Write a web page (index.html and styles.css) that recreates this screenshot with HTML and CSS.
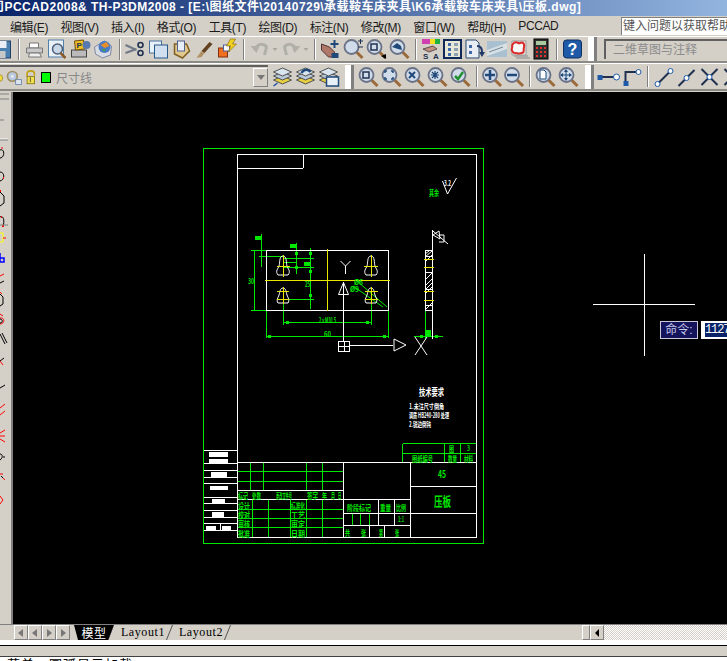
FILE: index.html
```html
<!DOCTYPE html>
<html lang="zh">
<head>
<meta charset="utf-8">
<title>PCCAD2008</title>
<link rel="stylesheet" href="styles.css">
</head>
<body>
<svg class="defs" width="0" height="0">
  <symbol id="mag" viewBox="0 0 22 22">
    <line x1="14" y1="14" x2="20" y2="20" stroke="#9a6a3a" stroke-width="3"/>
    <circle cx="9" cy="9" r="7" fill="#d0dcea" stroke="#6a7288" stroke-width="1.800"/>
  </symbol>
  <symbol id="layers" viewBox="0 0 22 22">
    <path d="M2 14l9-4 9 4-9 4z" fill="#e8d040" stroke="#505050"/>
    <path d="M2 10l9-4 9 4-9 4z" fill="#b8c8d8" stroke="#505050"/>
    <path d="M2 6l9-4 9 4-9 4z" fill="#d8e4ee" stroke="#505050"/>
  </symbol>
</svg>

<header class="titlebar"><span class="title-text">司PCCAD2008&amp; TH-P3DM2008 - [E:\图纸文件\20140729\承载鞍车床夹具\K6承载鞍车床夹具\压板.dwg]</span></header>

<nav class="menubar">
  <span class="menu">编辑(E)</span><span class="menu">视图(V)</span><span class="menu">插入(I)</span><span class="menu">格式(O)</span><span class="menu">工具(T)</span><span class="menu">绘图(D)</span><span class="menu">标注(N)</span><span class="menu">修改(M)</span><span class="menu">窗口(W)</span><span class="menu">帮助(H)</span><span class="menu">PCCAD</span>
  <span class="askbox">键入问题以获取帮助</span>
</nav>

<div class="toolrow toolrow-first">
  <svg class="ico" viewBox="0 0 22 22"><rect x="1" y="3" width="18" height="17" fill="#4a80b0" stroke="#20406a"/><rect x="5" y="3" width="10" height="7" fill="#e8eef4"/><rect x="6" y="13" width="8" height="7" fill="#c8c8c8"/></svg>
  <i class="sep"></i>
  <svg class="ico" viewBox="0 0 22 22"><path d="M6 5h9v5H6z" fill="#fff" stroke="#777"/><path d="M3 10h16v5H3z" fill="#c8c8c8" stroke="#777"/><path d="M6 15h10l2 4H5z" fill="#eee" stroke="#777"/></svg>
  <svg class="ico" viewBox="0 0 22 22"><rect x="2" y="2" width="15" height="17" fill="#e8f0f8" stroke="#5080a8"/><circle cx="11" cy="11" r="5" fill="#c8d8e8" stroke="#506078" stroke-width="1.5"/><line x1="14" y1="15" x2="19" y2="20" stroke="#8a5a2a" stroke-width="2.5"/></svg>
  <svg class="ico" viewBox="0 0 22 22"><rect x="2" y="12" width="15" height="7" fill="#bbb" stroke="#444"/><path d="M5 3l9-1 1 9-9 1z" fill="#f0c020" stroke="#705010"/><circle cx="17" cy="7" r="4" fill="#5878b0"/><text class="tiny-ico" x="7" y="10">P</text></svg>
  <svg class="ico" viewBox="0 0 22 22"><path d="M2 9l10-6 7 5-1 9-8 3-7-4z" fill="#d8dce4" stroke="#8088a0"/><circle cx="12" cy="9" r="6" fill="#4878c8"/><path d="M8 7l6-3 3 4-5 2z" fill="#e89028"/><path d="M9 11l4 0-1 3z" fill="#48a048"/></svg>
  <i class="sep"></i>
  <svg class="ico" viewBox="0 0 22 22"><path d="M1 7l11 5M1 15l11-4" stroke="#707888" stroke-width="2"/><circle cx="16" cy="7" r="2.5" fill="none" stroke="#203050" stroke-width="1.6"/><circle cx="16" cy="15" r="2.5" fill="none" stroke="#203050" stroke-width="1.6"/></svg>
  <svg class="ico" viewBox="0 0 22 22"><rect x="2" y="3" width="12" height="12" fill="#e8f0f8" stroke="#4870a0"/><rect x="7" y="7" width="13" height="13" fill="#d0e0f0" stroke="#285888"/></svg>
  <svg class="ico" viewBox="0 0 22 22"><path d="M4 6h12l3 7-7 7-8-4z" fill="#e0c890" stroke="#806020" stroke-width="1.5"/><rect x="7" y="3" width="7" height="10" fill="#e8eef8" stroke="#506090"/></svg>
  <svg class="ico" viewBox="0 0 22 22"><path d="M16 4l3 2-8 9-3-2z" fill="#604020"/><path d="M8 13l3 2-3 4-5 1z" fill="#b09060"/></svg>
  <svg class="ico" viewBox="0 0 22 22"><rect x="2" y="10" width="9" height="9" fill="#f07020" stroke="#803010"/><rect x="7" y="7" width="6" height="6" fill="#f8f8f8" stroke="#5060a0"/><path d="M14 1l5 0-3 5 4 0-8 8 2-6-4 0z" fill="#f0d020" stroke="#806000" stroke-width=".6"/></svg>
  <i class="sep"></i>
  <svg class="ico ico-wide" viewBox="0 0 30 22"><path d="M6 12c3-7 9-7 12-3l-2 8" fill="none" stroke="#b0b0a8" stroke-width="3"/><path d="M2 8l6 7 3-7z" fill="#b0b0a8"/><path d="M24 10h5l-2.500 3z" fill="#a8a8a0"/></svg>
  <svg class="ico ico-wide" viewBox="0 0 30 22"><path d="M17 12c-3-7-9-7-12-3l2 8" fill="none" stroke="#b0b0a8" stroke-width="3"/><path d="M21 8l-6 7-3-7z" fill="#b0b0a8"/><path d="M24 10h5l-2.500 3z" fill="#a8a8a0"/></svg>
  <i class="sep"></i>
  <svg class="ico" viewBox="0 0 22 22"><path d="M2 6l8 3 5 5v5H9L2 12z" fill="#b07868" stroke="#503030"/><path d="M15 2v8M11 6h8" stroke="#204878" stroke-width="2"/><rect x="12" y="15" width="7" height="5" fill="#204878"/></svg>
  <svg class="ico"><use href="#mag"/><path d="M16 3h5M18.500 1v5" stroke="#203050"/><path d="M16 9h5" stroke="#203050"/></svg>
  <svg class="ico"><use href="#mag"/><rect x="6" y="6" width="6" height="6" fill="none" stroke="#203050" stroke-width="1.500"/><path d="M16 18l5 3v-5z" fill="#000"/></svg>
  <svg class="ico"><use href="#mag"/><path d="M4 9l5-4 4 3 1 4-4-1z" fill="#204878"/></svg>
  <i class="sep"></i>
  <svg class="ico ico-22" viewBox="0 0 22 22"><rect x="2" y="1" width="18" height="5" fill="#d040b0"/><rect x="10" y="1" width="5" height="5" fill="#f0e020"/><rect x="15" y="1" width="5" height="5" fill="#20b040"/><path d="M3 11l10-3 4 3-8 3z" fill="#c09080" stroke="#605050"/><text class="tiny-ico" x="3" y="21">S</text><text class="tiny-ico" x="13" y="21">A</text></svg>
  <svg class="ico ico-22" viewBox="0 0 22 22"><rect x="2" y="2" width="17" height="18" fill="#e8e8d8" stroke="#102858" stroke-width="2"/><path d="M6 5h3v3H6zM6 10h3v3H6zM6 15h3v3H6z" fill="#4068a8"/><path d="M12 5h4v3h-4zM12 10h4v3h-4zM12 15h4v3h-4z" fill="#90a0b0"/></svg>
  <svg class="ico ico-22" viewBox="0 0 22 22"><path d="M2 2h10l3 3v15H2z" fill="#e8eef4" stroke="#284870"/><path d="M5 7h3v3H5zM5 13h3v3H5z" fill="#4068a8"/><path d="M13 8c4 0 5 3 5 6" fill="none" stroke="#203868" stroke-width="2"/><path d="M15 14h6l-3 5z" fill="#203868"/></svg>
  <svg class="ico ico-22" viewBox="0 0 22 22"><rect x="1" y="3" width="20" height="16" fill="#a8c0d0"/><path d="M1 12l20-7v6L1 18z" fill="#d8e0e4"/><path d="M3 14l14-5" stroke="#708898"/></svg>
  <svg class="ico ico-22" viewBox="0 0 22 22"><path d="M6 18h14M8 20h14" stroke="#888"/><path d="M4 3h14v14H4z" fill="#f0e4e0" stroke="#999"/><path d="M5 6c3-4 5 0 7-1s5 0 4 4 1 5-2 6-5 0-7 0-4-3-3-5-1-2 1-4z" fill="#f8f8f8" stroke="#d82828" stroke-width="2"/></svg>
  <svg class="ico ico-22" viewBox="0 0 22 22"><rect x="4" y="1" width="14" height="20" fill="#303030" stroke="#000"/><rect x="6" y="3" width="10" height="4" fill="#a8c8a0"/><path d="M6 9h2v2H6zM10 9h2v2h-2zM14 9h2v2h-2zM6 13h2v2H6zM10 13h2v2h-2zM14 13h2v2h-2zM6 17h2v2H6zM10 17h2v2h-2zM14 17h2v2h-2z" fill="#e03030"/></svg>
  <i class="sep"></i>
  <svg class="ico" viewBox="0 0 22 22"><rect x="2" y="2" width="18" height="18" rx="3" fill="#1e5aa8" stroke="#103060"/><text class="help-q" x="11" y="17">?</text></svg>
  <i class="grip grip-first"></i>
  <span class="workspace-combo">二维草图与注释</span>
</div>

<div class="toolrow toolrow-second">
  <div class="layer-combo">
    <svg class="ico ico-bulb" viewBox="0 0 9 22"><circle cx="-1" cy="11" r="6" fill="#f0d840" stroke="#807010"/></svg>
    <svg class="ico ico-lay" viewBox="0 0 22 22"><circle cx="9" cy="9" r="6" fill="#b8c8e0" stroke="#a09060" stroke-width="2"/><circle cx="9" cy="9" r="2" fill="#e0e8f0"/><rect x="13" y="13" width="7" height="6" fill="#dce4ee" stroke="#6080a8"/></svg>
    <svg class="ico ico-lay" viewBox="0 0 22 22"><path d="M5 9V6c0-5 9-5 9 0v2" fill="none" stroke="#c0a010" stroke-width="2"/><rect x="5" y="9" width="9" height="9" fill="#f0e050" stroke="#807010"/><path d="M9 10v6" stroke="#404040"/></svg>
    <span class="swatch"></span>
    <span class="layer-name">尺寸线</span>
    <span class="combo-btn"></span>
  </div>
  <svg class="ico ico-first" viewBox="0 0 22 22"><use href="#layers"/><path d="M2 20l4-3" stroke="#2050a0" stroke-width="1.500"/></svg>
  <svg class="ico" viewBox="0 0 22 22"><use href="#layers"/><path d="M7 7c2-4 7-4 9-1" fill="none" stroke="#204878" stroke-width="2.500"/></svg>
  <svg class="ico" viewBox="0 0 22 22"><use href="#layers"/><rect x="9" y="11" width="12" height="9" fill="#e8f0f8" stroke="#204878" stroke-width="1.500"/></svg>
  <i class="grip grip-mid"></i>
  <svg class="ico"><use href="#mag"/><rect x="6" y="6" width="6" height="6" fill="none" stroke="#203050" stroke-width="1.500"/></svg>
  <svg class="ico"><use href="#mag"/><path d="M5 7V5h2M11 5h2v2M13 11v2h-2M7 13H5v-2" fill="none" stroke="#204878" stroke-width="1.500"/></svg>
  <svg class="ico"><use href="#mag"/><path d="M6 6l6 6M12 6l-6 6" stroke="#204878" stroke-width="2"/></svg>
  <svg class="ico"><use href="#mag"/><path d="M9 5v8M5 9h8M6 6l6 6M12 6l-6 6" stroke="#204878" stroke-width="1.200"/></svg>
  <svg class="ico"><use href="#mag"/><path d="M6 10l3 3 5-7" fill="none" stroke="#209030" stroke-width="2.500"/></svg>
  <i class="sep"></i>
  <svg class="ico ico-22"><use href="#mag"/><path d="M9 4v10M4 9h10" stroke="#204878" stroke-width="2.500"/></svg>
  <svg class="ico ico-22"><use href="#mag"/><path d="M4 9h10" stroke="#204878" stroke-width="2.500"/></svg>
  <i class="sep"></i>
  <svg class="ico"><use href="#mag"/><path d="M6 4h4l2 2v7H6z" fill="#fff" stroke="#204878"/></svg>
  <svg class="ico"><use href="#mag"/><path d="M9 4v10M4 9h10" stroke="#204878"/><path d="M9 3l-2 3h4zM9 15l-2-3h4zM3 9l3-2v4zM15 9l-3-2v4z" fill="#204878"/></svg>
  <i class="grip grip-last"></i>
  <svg class="ico" viewBox="0 0 22 22"><line x1="2" y1="11" x2="18" y2="11" stroke="#203050" stroke-width="2"/><rect x="0" y="9" width="5" height="5" fill="#1e5aa8"/><circle cx="19" cy="11" r="3" fill="#fff" stroke="#1e5aa8"/></svg>
  <svg class="ico" viewBox="0 0 22 22"><path d="M5 18V6h11" fill="none" stroke="#203050" stroke-width="2"/><rect x="3" y="15" width="5" height="5" fill="#1e5aa8"/><circle cx="18" cy="6" r="2.500" fill="#fff" stroke="#1e5aa8"/></svg>
  <i class="sep"></i>
  <svg class="ico" viewBox="0 0 22 22"><line x1="5" y1="18" x2="18" y2="5" stroke="#203050" stroke-width="2"/><circle cx="5" cy="18" r="2.500" fill="#fff" stroke="#1e5aa8"/><circle cx="18" cy="5" r="2.500" fill="#fff" stroke="#1e5aa8"/></svg>
  <svg class="ico" viewBox="0 0 22 22"><line x1="3" y1="20" x2="19" y2="4" stroke="#203050" stroke-width="2"/><circle cx="11" cy="12" r="2.500" fill="#fff" stroke="#1e5aa8"/></svg>
  <svg class="ico" viewBox="0 0 22 22"><path d="M3 3l16 16M19 3L3 19" stroke="#203050" stroke-width="2"/><circle cx="11" cy="11" r="2.500" fill="#fff" stroke="#1e5aa8"/></svg>
  <svg class="ico" viewBox="0 0 22 22"><path d="M3 3l16 16M19 3L3 19" stroke="#203050" stroke-width="2"/><circle cx="11" cy="11" r="2.500" fill="#fff" stroke="#1e5aa8"/></svg>
</div>

<main class="workspace">
  <aside class="sidestrip">
    <svg class="sidestrip-art" viewBox="0 0 11 534" width="11" height="534" fill="none" stroke="#000" stroke-width="1">
      <path d="M0 2h9M0 7h9" stroke="#808080"/>
      <path d="M0 28h4" stroke="#808080"/>
      <path d="M0 47h8" stroke="#fff"/><path d="M0 48h8" stroke="#808080"/>
      <path d="M0 58c5-2 5 8 0 8"/><path d="M1 56l2 0" stroke="#f00"/>
      <path d="M0 80c5 0 5 8 0 9"/><path d="M3 86h1" stroke="#f00" stroke-width="2"/>
      <path d="M0 100l4 4v7l-4 3"/><path d="M0 99h1" stroke="#f00" stroke-width="2"/>
      <path d="M0 125c3-2 5 3 3 9"/><path d="M2 134h2M1 125h1" stroke="#f00" stroke-width="2"/>
      <path d="M0 133h8" stroke="#808080"/>
      <path d="M0 141h3v9H0" stroke="#ff0"/><path d="M3 146h3" stroke="#f00"/>
      <path d="M0 161v9h4v-4H0" stroke="#00f" stroke-width="1.500"/>
      <path d="M0 184l4-2" stroke="#f00"/><path d="M0 191l4-2"/>
      <path d="M0 202l3 3v7l-3 2"/><path d="M0 200l2 2" stroke="#f00"/>
      <path d="M0 222l3 2M0 226c5-1 5 6 0 6" stroke="#f00"/><path d="M0 227c3 0 3 4 0 4"/>
      <path d="M0 242l5 10M2 241l5 10"/>
      <path d="M4 266l-4 3"/><path d="M0 269l3 4" stroke="#f00"/>
      <path d="M0 296l5-3"/>
      <path d="M0 316l5-4M0 323l5-4" stroke="#f00"/>
      <path d="M0 341l5-3M0 344h5M0 347l5 3" stroke="#f00"/>
      <path d="M0 362c3 0 3 4 0 6M3 365h2"/>
      <path d="M0 382l3 0M3 386l2 2" stroke="#f00"/><path d="M1 384l2 2"/>
      <path d="M0 404l3 4-3 4" stroke="#f00"/>
    </svg>
  </aside>
  <div class="canvas">
    <svg class="drawing" viewBox="13 93 714 532" xmlns="http://www.w3.org/2000/svg">
      <g class="g-line">
        <rect x="203.500" y="149.500" width="280" height="395"/>
        <path d="M402.500 444.500h74M402.500 454.500h74M402.500 444.500v19M444.500 444.500v19M460.500 444.500v19"/>
        <path d="M250.500 463v28M263.500 463v28M306.500 463v28M322.500 463v28M237 472.500h106M237 482.500h106"/>
        <path d="M252.500 500v38M268.500 500v38M290.500 500v38M306.500 500v38M322.500 500v38M237 510.500h106M237 519.500h106M237 528.500h106"/>
        <path d="M352.500 514v12M360.500 514v12M369.500 514v12"/>
        <path d="M251 251.500h15M251 311.500h15M254.500 251v60"/>
        <path d="M266.500 311v28M388.500 311v28M266 337.500h122M283.500 303v23M371.500 303v23M283 323.500h88"/>
        <path d="M261.500 235v33M296.500 244v31M310.500 249v61M259 257.500h24M283 259.500h31M283 263.500h13M283 268.500h31M283 300.500h31"/>
        <path d="M425.500 312v28M432.500 312v28M414 337.500h29"/>
      </g>
      <g class="g-line g-smooth"><path d="M357 282l30 26M353 287l30 21"/></g>
      <g class="g-fill">
        <rect x="255" y="237" width="6" height="4"/><rect x="290" y="245" width="6" height="4"/><rect x="304" y="263" width="6" height="4"/>
        <rect x="425" y="331" width="6" height="6"/>
        <rect x="268" y="336" width="3" height="3"/><rect x="383" y="336" width="3" height="3"/><rect x="286" y="322" width="3" height="3"/><rect x="366" y="322" width="3" height="3"/>
        <rect x="295" y="253" width="3" height="3"/><rect x="295" y="267" width="3" height="3"/><rect x="309" y="253" width="3" height="3"/><rect x="309" y="271" width="3" height="3"/><rect x="309" y="295" width="3" height="3"/>
        <rect x="420" y="336" width="3" height="3"/><rect x="435" y="336" width="3" height="3"/>
      </g>
      <g class="g-white">
        <path d="M237.500 155v383.500H476.500V155.500H237M303.500 155v14M237 169.500h66"/>
        <path d="M204 451.500h33M204 464.500h33M204 471.500h33M204 478.500h33M204 484.500h33M204 498.500h33M204 504.500h33M204 511.500h33M204 518.500h33M204 524.500h33M204 531.500h33M220.500 524v7"/>
        <path d="M237 463.500h239M343.500 463v75M410.500 463v75M410 487.500h66M410 514.500h66M237 491.500h106M237 500.500h173M343 514.500h67M343 526.500h67M378.500 500v26M394.500 500v26M369.500 526v12M384.500 526v12"/>
        <rect x="266.500" y="251.500" width="122" height="60"/>
        <path d="M343.500 283v59M349 346.500h44"/>
        <rect x="338.500" y="342.500" width="11" height="10"/><path d="M344 342v10M338 347.500h11"/>
        <path d="M432.500 231v109M425.500 251.500h7v60h-7zM425 257h7M425 273.500h7M425 290h7M425 306h7"/>
      </g>
      <g class="g-white g-smooth">
        <path d="M340.500 262l5 5 5-5M345.500 267v8"/>
        <path d="M338.500 295.500l5-12 5 12z"/>
        <path d="M394 340l12 6-12 6z"/>
        <path d="M415 338l12 18M427 338l-12 18"/>
        <path d="M283 257c4 0 3 7 4 10s4 5 1 9h-10c-3-4 0-6 1-9s0-10 4-10z"/>
        <path d="M371 257c4 0 3 7 4 10s4 5 1 9h-10c-3-4 0-6 1-9s0-10 4-10z"/>
        <path d="M283 289c3 0 3 4 4 7s3 5 1 8h-10c-2-3 0-5 1-8s1-7 4-7z"/>
        <path d="M371 289c3 0 3 4 4 7s3 5 1 8h-10c-2-3 0-5 1-8s1-7 4-7z"/>
        <path d="M425 258l7-6M425 255l4-3M426 262l6-6M426 280l6-6M426 286l6-6M426 290l6-6M426 294l6-6M426 310l6-6"/>
        <path d="M433 236l6-4 1 8zM439 236h5v7h-5M433 232l15 13"/>
        <path d="M442.500 182l5 13 9-16"/>
      </g>
      <g class="g-yellow">
        <path d="M327.500 250v62M265 281.500h125"/>
        <path d="M283.500 256v22M277 267.500h13M371.500 256v22M364 267.500h14M283.500 288v17M277 292.500h12M277 300.500h12M371.500 288v17M365 292.500h13M365 300.500h13"/>
        <path d="M424 260.500h10M424 268.500h10M424 292.500h10M424 301.500h10"/>
      </g>
      <text class="t-g t-7" x="319" y="324" textLength="17" lengthAdjust="spacingAndGlyphs">2×M10.5</text>
      <text class="t-g t-7" x="324" y="338" textLength="7" lengthAdjust="spacingAndGlyphs">60</text>
      <text class="t-g t-7" x="248" y="285" textLength="6" lengthAdjust="spacingAndGlyphs">30</text>
      <text class="t-g t-7" x="305" y="288" textLength="5" lengthAdjust="spacingAndGlyphs">25</text>
      <text class="t-g t-7" x="354" y="286" textLength="9" lengthAdjust="spacingAndGlyphs">Ø6</text>
      <text class="t-g t-7" x="350" y="293" textLength="9" lengthAdjust="spacingAndGlyphs">Ø9</text>
      <text class="t-g t-8" x="429" y="197" textLength="10" lengthAdjust="spacingAndGlyphs">其余</text>
      <text class="t-w t-7" x="444" y="187" textLength="7" lengthAdjust="spacingAndGlyphs">3.2</text>
      <text class="t-w t-10" x="419" y="397" textLength="25" lengthAdjust="spacingAndGlyphs">技术要求</text>
      <text class="t-w t-7" x="409" y="410" textLength="35" lengthAdjust="spacingAndGlyphs">1.未注尺寸倒角</text>
      <text class="t-w t-7" x="409" y="419" textLength="40" lengthAdjust="spacingAndGlyphs">调质 HB240-280 处理</text>
      <text class="t-w t-7" x="409" y="428" textLength="22" lengthAdjust="spacingAndGlyphs">2.锐边倒钝</text>
      <text class="t-g t-8" x="449" y="453" textLength="5" lengthAdjust="spacingAndGlyphs">图</text>
      <text class="t-g t-7" x="467" y="452" textLength="3" lengthAdjust="spacingAndGlyphs">3</text>
      <text class="t-g t-8" x="412" y="463" textLength="21" lengthAdjust="spacingAndGlyphs">图纸编号</text>
      <text class="t-g t-8" x="448" y="463" textLength="9" lengthAdjust="spacingAndGlyphs">数量</text>
      <text class="t-g t-8" x="464" y="463" textLength="9" lengthAdjust="spacingAndGlyphs">材料</text>
      <text class="t-g t-10" x="438" y="479" textLength="8" lengthAdjust="spacingAndGlyphs">45</text>
      <text class="t-g t-13" x="434" y="507" textLength="17" lengthAdjust="spacingAndGlyphs">压板</text>
      <text class="t-g t-8" x="238" y="500" textLength="10" lengthAdjust="spacingAndGlyphs">标记</text>
      <text class="t-g t-8" x="252" y="500" textLength="9" lengthAdjust="spacingAndGlyphs">处数</text>
      <text class="t-g t-8" x="276" y="500" textLength="16" lengthAdjust="spacingAndGlyphs">更改文件号</text>
      <text class="t-g t-8" x="307" y="500" textLength="11" lengthAdjust="spacingAndGlyphs">签字</text>
      <text class="t-g t-8" x="322" y="500" textLength="5" lengthAdjust="spacingAndGlyphs">年</text>
      <text class="t-g t-8" x="331" y="500" textLength="4" lengthAdjust="spacingAndGlyphs">月</text>
      <text class="t-g t-8" x="338" y="500" textLength="3" lengthAdjust="spacingAndGlyphs">日</text>
      <text class="t-g t-8" x="238" y="510" textLength="12" lengthAdjust="spacingAndGlyphs">设计</text>
      <text class="t-g t-8" x="238" y="519" textLength="12" lengthAdjust="spacingAndGlyphs">校对</text>
      <text class="t-g t-8" x="238" y="528" textLength="12" lengthAdjust="spacingAndGlyphs">审核</text>
      <text class="t-g t-8" x="238" y="538" textLength="12" lengthAdjust="spacingAndGlyphs">批准</text>
      <text class="t-g t-8" x="291" y="510" textLength="14" lengthAdjust="spacingAndGlyphs">标准化</text>
      <text class="t-g t-8" x="291" y="519" textLength="14" lengthAdjust="spacingAndGlyphs">工艺</text>
      <text class="t-g t-8" x="291" y="528" textLength="14" lengthAdjust="spacingAndGlyphs">审定</text>
      <text class="t-g t-8" x="291" y="538" textLength="14" lengthAdjust="spacingAndGlyphs">日期</text>
      <text class="t-g t-8" x="347" y="512" textLength="24" lengthAdjust="spacingAndGlyphs">阶段标记</text>
      <text class="t-g t-8" x="380" y="512" textLength="11" lengthAdjust="spacingAndGlyphs">重量</text>
      <text class="t-g t-8" x="396" y="512" textLength="10" lengthAdjust="spacingAndGlyphs">比例</text>
      <text class="t-g t-7" x="398" y="523" textLength="6" lengthAdjust="spacingAndGlyphs">1:1</text>
      <text class="t-g t-8" x="345" y="537" textLength="5" lengthAdjust="spacingAndGlyphs">共</text>
      <text class="t-g t-8" x="361" y="537" textLength="5" lengthAdjust="spacingAndGlyphs">张</text>
      <text class="t-g t-8" x="379" y="537" textLength="4" lengthAdjust="spacingAndGlyphs">第</text>
      <text class="t-g t-8" x="395" y="537" textLength="4" lengthAdjust="spacingAndGlyphs">张</text>
      <g class="g-blocks">
        <rect x="209" y="453" width="19" height="5"/><rect x="209" y="460" width="19" height="4"/><rect x="211" y="473" width="16" height="5"/><rect x="210" y="487" width="18" height="4"/><rect x="212" y="500" width="13" height="4"/><rect x="212" y="513" width="12" height="5"/><rect x="206" y="527" width="10" height="4"/><rect x="222" y="527" width="9" height="4"/>
      </g>
      <path class="g-white" d="M593 305.500h102M644.500 255v102"/>
    </svg>
    <div class="tip-label">命令:</div>
    <div class="tip-input"><span class="tip-value">1127</span></div>
  </div>
</main>

<div class="tabbar">
  <div class="tab-nav">
    <span class="nav-btn nav-first"></span><span class="nav-btn nav-prev"></span><span class="nav-btn nav-next"></span><span class="nav-btn nav-last"></span>
  </div>
  <span class="tab tab-active">模型</span>
  <span class="tab">Layout1</span>
  <span class="tab">Layout2</span>
  <div class="tab-spacer"></div>
  <span class="hs-grip"></span>
  <span class="hs-arrow"></span>
  <div class="hs-track"></div>
</div>
<div class="gap-white"></div>
<div class="cmd-head"></div>
<div class="cmd-text">菜单：圆弧显示加载</div>
</body>
</html>
```

FILE: styles.css
```css
* { box-sizing: border-box; }
html, body { margin: 0; padding: 0; }
body {
  width: 727px;
  height: 661px;
  overflow: hidden;
  background: #d4d0c8;
  font-family: "Liberation Sans", "Noto Sans CJK SC", sans-serif;
  color: #000;
  display: flex;
  flex-direction: column;
}
.defs { position: absolute; }

.titlebar {
  height: 16px;
  flex: none;
  background: linear-gradient(90deg, #0a246a 0%, #a6caf0 115%);
  color: #fff;
  font-weight: bold;
  font-size: 12px;
  letter-spacing: .47px;
  line-height: 15px;
  white-space: nowrap;
  overflow: hidden;
}
.title-text { margin-left: -8px; }

.menubar {
  height: 20px;
  flex: none;
  display: flex;
  align-items: center;
  padding-left: 10px;
  gap: 12.500px;
  font-size: 12px;
  letter-spacing: -.4px;
  color: #1a1a1a;
  white-space: nowrap;
}
.menu { flex: none; }
.askbox {
  margin-left: auto;
  margin-right: 0;
  width: 106px;
  height: 18px;
  background: #fff;
  border-top: 1px solid #808080;
  border-left: 1px solid #808080;
  color: #555;
  font-size: 12px;
  letter-spacing: 0;
  line-height: 16px;
  padding-left: 1px;
  overflow: hidden;
  flex: none;
}

.toolrow {
  height: 27px;
  flex: none;
  display: flex;
  align-items: center;
  border-top: 1px solid #fff;
  border-bottom: 2px solid #8c8a84;
  white-space: nowrap;
}
.toolrow-second { height: 28px; }
.ico { width: 23px; height: 22px; flex: none; padding: 0; }
.ico-22 { width: 22px; }
.ico-wide { width: 31px; }
.toolrow-first > .ico:first-child { margin-left: -9px; }
.sep {
  flex: none;
  width: 1px;
  height: 21px;
  margin: 0 3px 0 4px;
  background: #808080;
  border-right: 1px solid #fff;
  box-sizing: content-box;
}
.grip {
  flex: none;
  width: 9px;
  height: 24px;
  border-left: 2px solid #fff;
  border-right: 3px solid #808080;
  background: #fff;
  background-clip: content-box;
}
.grip-first { margin: 0 7px 0 4px; }
.grip-mid { margin: 0 3px 0 5px; }
.grip-last { margin: 0 3px 0 5px; }
.workspace-combo {
  flex: none;
  width: 130px;
  height: 20px;
  border-top: 2px solid #606060;
  border-left: 2px solid #606060;
  color: #8c8c8c;
  font-size: 12px;
  line-height: 18px;
  padding-left: 7px;
}
.tiny-ico { font: bold 8px "Liberation Sans", sans-serif; fill: #203050; }
.help-q { font: bold 16px "Liberation Sans", sans-serif; fill: #fff; text-anchor: middle; }
.ico-bulb { width: 5px; }
.ico-lay { width: 18px; }
.layer-combo {
  flex: none;
  width: 268px;
  height: 23px;
  display: flex;
  align-items: center;
  border-top: 2px solid #606060;
  padding-right: 0;
}
.swatch {
  flex: none;
  width: 10px;
  height: 11px;
  background: #00ff00;
  border: 1px solid #000;
}
.layer-name { color: #888; font-size: 12px; padding-left: 5px; flex: 1; }
.combo-btn {
  flex: none;
  width: 15px;
  height: 19px;
  background: #d4d0c8;
  border: 1px solid #808080;
  border-top-color: #fff;
  border-left-color: #fff;
  position: relative;
}
.combo-btn::after {
  content: "";
  position: absolute;
  left: 3px;
  top: 6px;
  border: 4px solid transparent;
  border-top: 5px solid #777;
  border-bottom: 0;
}
.ico-first { margin-left: 3px; }

.workspace { flex: none; height: 532px; display: flex; margin-top: 1px; }
.sidestrip {
  flex: none;
  width: 13px;
  height: 532px;
  border-right: 2px solid #808080;
  overflow: hidden;
}
.sidestrip-art { display: block; }
.canvas {
  flex: none;
  width: 714px;
  height: 532px;
  background: #000;
  position: relative;
  overflow: hidden;
}
.drawing { display: block; width: 714px; height: 532px; shape-rendering: crispEdges; }
.g-line { fill: none; stroke: #00e800; stroke-width: 1; }
.g-fill { fill: #00e800; stroke: none; }
.g-white { fill: none; stroke: #fff; stroke-width: 1; }
.g-smooth { shape-rendering: auto; }
.g-yellow { fill: none; stroke: #e8e800; stroke-width: 1; }
.g-blocks { fill: #fff; stroke: none; }
.t-g { fill: #00e800; font-family: "Noto Sans CJK SC", sans-serif; font-weight: 700; }
.t-w { fill: #fff; font-family: "Noto Sans CJK SC", sans-serif; font-weight: 700; }
.t-7 { font-size: 7px; }
.t-8 { font-size: 8px; }
.t-10 { font-size: 10px; }
.t-13 { font-size: 13px; }

.tip-label {
  position: absolute;
  left: 647px;
  top: 229px;
  width: 38px;
  height: 18px;
  background: #14145c;
  border: 1px solid #c8c8d8;
  color: #c8c8e8;
  font-size: 12px;
  line-height: 16px;
  text-align: center;
}
.tip-input {
  position: absolute;
  left: 688px;
  top: 229px;
  width: 60px;
  height: 18px;
  background: #fff;
  padding: 2px 0 2px 4px;
}
.tip-value {
  display: block;
  background: #0a246a;
  color: #fff;
  font-family: "Liberation Mono", monospace;
  font-size: 12px;
  letter-spacing: -1.100px;
  line-height: 14px;
  height: 14px;
  width: 100%;
}

.tabbar {
  flex: none;
  height: 16px;
  display: flex;
  align-items: stretch;
  padding-left: 14px;
  border-top: 1px solid #808080;
  font-family: "Liberation Serif", "Noto Sans CJK SC", serif;
  font-size: 12px;
}
.tab-nav { display: flex; width: 56px; flex: none; }
.nav-btn {
  width: 14px;
  flex: none;
  border: 1px solid #fff;
  border-right-color: #808080;
  border-bottom-color: #808080;
  position: relative;
}
.nav-btn::after {
  content: "";
  position: absolute;
  top: 3px;
  border-top: 4px solid transparent;
  border-bottom: 4px solid transparent;
}
.nav-first::after, .nav-prev::after { left: 3px; border-right: 5px solid #777; }
.nav-next::after, .nav-last::after { left: 4px; border-left: 5px solid #777; }
.tab {
  flex: none;
  width: 58px;
  text-align: center;
  line-height: 15px;
  color: #000;
  letter-spacing: .6px;
  position: relative;
}
.tab::after {
  content: "";
  position: absolute;
  right: 2px;
  top: 0;
  height: 100%;
  border-right: 1px solid #555;
  transform: skewX(-22deg);
}
.tab-active {
  width: 40px;
  background: #000;
  color: #fff;
  font-family: "Noto Sans CJK SC", sans-serif;
  margin-left: 4px;
  clip-path: polygon(0 0, 100% 0, 86% 100%, 10% 100%);
}
.tab-spacer { flex: 1; }
.hs-grip { flex: none; width: 8px; border: 1px solid #fff; border-right-color: #808080; border-bottom-color: #808080; }
.hs-arrow {
  flex: none;
  width: 14px;
  border: 1px solid #808080;
  border-top-color: #fff;
  border-left-color: #fff;
  position: relative;
}
.hs-arrow::after {
  content: "";
  position: absolute;
  left: 4px;
  top: 3px;
  border-top: 4px solid transparent;
  border-bottom: 4px solid transparent;
  border-right: 4px solid #000;
}
.hs-track {
  flex: none;
  width: 123px;
  background: repeating-conic-gradient(#fff 0 25%, #d4d0c8 0 50%) 0 0 / 2px 2px;
}
.gap-white { flex: none; height: 5px; background: #fff; }
.cmd-head {
  flex: none;
  height: 12px;
  border-top: 1px solid #000;
  border-bottom: 1px solid #404040;
}
.cmd-text {
  flex: 1;
  background: #fff;
  font-family: "Noto Sans CJK SC", sans-serif;
  font-size: 13px;
  letter-spacing: 1px;
  line-height: 12px;
  padding: 1px 0 0 7px;
  overflow: hidden;
}
```
